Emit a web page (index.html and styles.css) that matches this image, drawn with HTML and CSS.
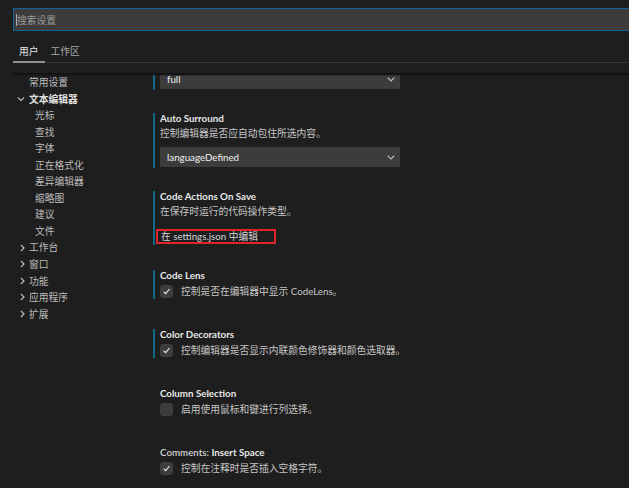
FILE: index.html
```html
<!DOCTYPE html>
<html lang="zh-CN">
<head>
<meta charset="utf-8">
<title>设置</title>
<link rel="stylesheet" href="styles.css">
</head>
<body>
<div class="editor">
  <div class="search"><span class="caret"></span><span class="placeholder">搜索设置</span></div>
  <div class="tabs">
    <div class="tab active">用户</div>
    <div class="tab">工作区</div>
  </div>
  <div class="body">
    <nav class="toc">
      <div class="toc-row top">常用设置</div>
      <div class="toc-row group bold"><svg class="chev" viewBox="0 0 8 8" width="8" height="8"><path d="M0.8 2.3 L4 5.5 L7.2 2.3" /></svg>文本编辑器</div>
      <div class="toc-row child">光标</div>
      <div class="toc-row child">查找</div>
      <div class="toc-row child">字体</div>
      <div class="toc-row child">正在格式化</div>
      <div class="toc-row child">差异编辑器</div>
      <div class="toc-row child">缩略图</div>
      <div class="toc-row child">建议</div>
      <div class="toc-row child">文件</div>
      <div class="toc-row group"><svg class="chev right" viewBox="0 0 8 8" width="8" height="8"><path d="M3 1 L6 4 L3 7" /></svg>工作台</div>
      <div class="toc-row group"><svg class="chev right" viewBox="0 0 8 8" width="8" height="8"><path d="M3 1 L6 4 L3 7" /></svg>窗口</div>
      <div class="toc-row group"><svg class="chev right" viewBox="0 0 8 8" width="8" height="8"><path d="M3 1 L6 4 L3 7" /></svg>功能</div>
      <div class="toc-row group"><svg class="chev right" viewBox="0 0 8 8" width="8" height="8"><path d="M3 1 L6 4 L3 7" /></svg>应用程序</div>
      <div class="toc-row group"><svg class="chev right" viewBox="0 0 8 8" width="8" height="8"><path d="M3 1 L6 4 L3 7" /></svg>扩展</div>
    </nav>
    <div class="settings">
      <div class="setting modified after-drop">
        <div class="title"></div>
        <div class="desc"></div>
        <div class="select"><span>full</span><svg class="dd" viewBox="0 0 8 5" width="8" height="5"><path d="M0.7 0.7 L4 4 L7.3 0.7" /></svg></div>
      </div>
      <div class="setting modified after-drop">
        <div class="title">Auto Surround</div>
        <div class="desc">控制编辑器是否应自动包住所选内容。</div>
        <div class="select"><span>languageDefined</span><svg class="dd" viewBox="0 0 8 5" width="8" height="5"><path d="M0.7 0.7 L4 4 L7.3 0.7" /></svg></div>
      </div>
      <div class="setting modified after-link">
        <div class="title">Code Actions On Save</div>
        <div class="desc">在保存时运行的代码操作类型。</div>
        <div class="link-row"><span class="link">在 settings.json 中编辑</span></div>
      </div>
      <div class="setting modified after-check">
        <div class="title">Code Lens</div>
        <div class="check-row"><span class="checkbox"><svg viewBox="0 0 13 13" width="13" height="13"><path d="M3.2 6.8 L5.5 9.1 L10 3.8" /></svg></span><span class="check-text">控制是否在编辑器中显示 CodeLens。</span></div>
      </div>
      <div class="setting modified after-check">
        <div class="title">Color Decorators</div>
        <div class="check-row"><span class="checkbox"><svg viewBox="0 0 13 13" width="13" height="13"><path d="M3.2 6.8 L5.5 9.1 L10 3.8" /></svg></span><span class="check-text">控制编辑器是否显示内联颜色修饰器和颜色选取器。</span></div>
      </div>
      <div class="setting after-check">
        <div class="title">Column Selection</div>
        <div class="check-row"><span class="checkbox"></span><span class="check-text">启用使用鼠标和键进行列选择。</span></div>
      </div>
      <div class="setting after-check">
        <div class="title"><span class="category">Comments: </span>Insert Space</div>
        <div class="check-row"><span class="checkbox"><svg viewBox="0 0 13 13" width="13" height="13"><path d="M3.2 6.8 L5.5 9.1 L10 3.8" /></svg></span><span class="check-text">控制在注释时是否插入空格字符。</span></div>
      </div>
    </div>
  </div>
</div>
</body>
</html>
```
FILE: styles.css
```css
html, body {
  margin: 0;
  padding: 0;
  height: 100%;
  background: #1e1e1e;
  overflow: hidden;
}

body {
  font-family: Lato, "Noto Sans CJK SC", sans-serif;
  font-size: 9.75px;
  color: #cccccc;
}

.editor {
  display: flex;
  flex-direction: column;
  height: 100%;
  padding: 8px 0 0 13px;
  box-sizing: border-box;
}

.search {
  height: 23px;
  box-sizing: border-box;
  background: #3c3c3c;
  border: 1px solid #0e639c;
  border-right: none;
  display: flex;
  align-items: center;
  padding-left: 2px;
}

.caret {
  width: 1px;
  height: 12px;
  background: #aeaeae;
}

.placeholder {
  color: #9a9a9a;
  line-height: 12px;
}

.tabs {
  display: flex;
  margin-top: 10px;
  border-bottom: 1px solid #363636;
  height: 21px;
}

.tab {
  padding: 0 6px;
  line-height: 20px;
  height: 20px;
  border-bottom: 2px solid transparent;
  color: #a9a9a9;
}

.tab.active {
  color: #e7e7e7;
  border-bottom-color: #8f8f8f;
}

.body {
  flex: 1;
  margin-top: 10px;
  display: flex;
  overflow: hidden;
  position: relative;
}

.body::before {
  content: "";
  position: absolute;
  left: 0;
  right: 0;
  top: 0;
  height: 3px;
  background: linear-gradient(#0f0f0f, #161616 50%, rgba(30, 30, 30, 0));
  z-index: 2;
}

.toc {
  width: 140px;
  flex: none;
  padding-top: 1px;
  display: flex;
  flex-direction: column;
}

.toc-row {
  height: 16.56px;
  line-height: 16.56px;
  display: flex;
  align-items: center;
  color: #bdbdbd;
  white-space: nowrap;
}

.toc-row.top {
  padding-left: 16px;
}

.toc-row.group {
  padding-left: 4px;
}

.toc-row.bold {
  font-weight: 700;
  color: #e2e2e2;
}

.toc-row.child {
  padding-left: 22px;
}

.chev {
  width: 8px;
  height: 8px;
  margin-right: 4px;
  fill: none;
  stroke: #c5c5c5;
  stroke-width: 1.1;
}

.chev.right {
  margin-left: 1px;
  margin-right: 3px;
}

.settings {
  flex: 1;
  margin-top: -38px;
  display: flex;
  flex-direction: column;
}

.setting {
  border-left: 2px solid transparent;
  padding-left: 5px;
  padding-bottom: 1px;
}

.setting.modified {
  border-left-color: #0f6a87;
}

.after-drop {
  margin-bottom: 23px;
}

.after-link {
  margin-bottom: 25px;
}

.after-check {
  margin-bottom: 30px;
}

.title {
  font-weight: 700;
  color: #e7e7e7;
  line-height: 10px;
  height: 10px;
  white-space: nowrap;
}

.category {
  font-weight: 600;
  color: #d2d2d2;
}

.desc {
  margin-top: 5px;
  line-height: 10px;
  height: 10px;
  color: #c6c6c6;
  white-space: nowrap;
}

.select {
  margin-top: 9px;
  width: 240px;
  height: 20px;
  box-sizing: border-box;
  background: #3c3c3c;
  padding: 0 5px 0 7px;
  display: flex;
  align-items: center;
  justify-content: space-between;
  color: #f0f0f0;
}

.dd {
  fill: none;
  stroke: #c5c5c5;
  stroke-width: 1.1;
}

.link-row {
  margin-top: 13px;
  height: 15px;
}

.link {
  display: inline-block;
  box-sizing: border-box;
  width: 120px;
  height: 15px;
  margin-left: -4px;
  padding-left: 3px;
  border: 2px solid #e0242c;
  line-height: 11px;
  color: #d4d4d4;
  white-space: nowrap;
}

.check-row {
  margin-top: 5px;
  height: 13px;
  display: flex;
  align-items: center;
  gap: 8px;
}

.checkbox {
  width: 13px;
  height: 13px;
  box-sizing: border-box;
  border-radius: 3px;
  background: #3c3c3c;
  border: 1px solid #3f3f3f;
  display: flex;
  align-items: center;
  justify-content: center;
}

.checkbox svg {
  width: 11px;
  height: 11px;
  fill: none;
  stroke: #e6e6e6;
  stroke-width: 1.3;
}

.check-text {
  color: #c6c6c6;
  white-space: nowrap;
  line-height: 13px;
}
```
